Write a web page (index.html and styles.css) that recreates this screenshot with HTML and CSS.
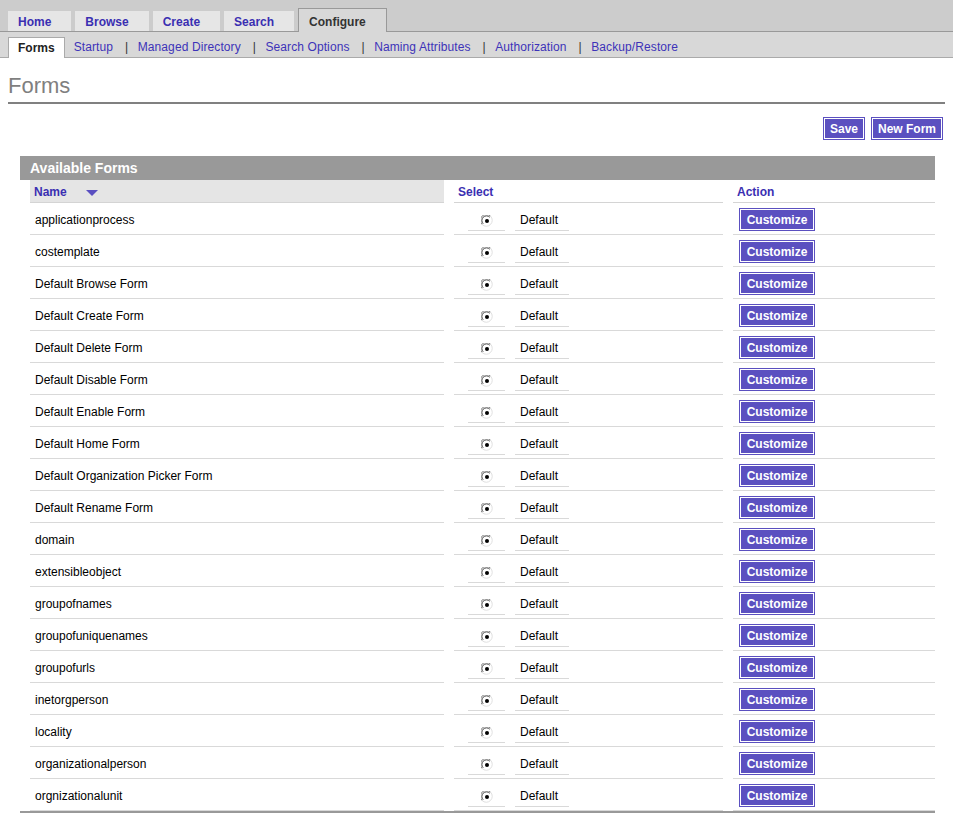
FILE: index.html
```html
<!DOCTYPE html>
<html>
<head>
<meta charset="utf-8">
<title>Forms</title>
<link rel="stylesheet" href="styles.css">
</head>
<body>
<div class="topnav">
  <a class="tab">Home</a>
  <a class="tab">Browse</a>
  <a class="tab">Create</a>
  <a class="tab">Search</a>
  <span class="tab tab-active">Configure</span>
</div>
<div class="subnav">
  <span class="subtab-active">Forms</span>
  <a class="sublink sublink-first">Startup</a><span class="sep">|</span>
  <a class="sublink">Managed Directory</a><span class="sep">|</span>
  <a class="sublink">Search Options</a><span class="sep">|</span>
  <a class="sublink">Naming Attributes</a><span class="sep">|</span>
  <a class="sublink">Authorization</a><span class="sep">|</span>
  <a class="sublink">Backup/Restore</a>
</div>
<div class="page">
  <h1 class="title">Forms</h1>
  <div class="toolbar">
    <button class="btn">Save</button>
    <button class="btn">New Form</button>
  </div>
  <div class="table">
    <div class="table-title">Available Forms</div>
    <div class="grid-row head-row">
      <div class="hcell hcell-name">Name <svg class="sort" width="12" height="7" viewBox="0 0 12 7"><polygon points="0,0 12,0 6,6" fill="#5a4fc1"/></svg></div>
      <div class="hcell">Select</div>
      <div class="hcell">Action</div>
    </div>
    <div id="rows"></div>
  </div>
</div>
<script src="app.js"></script>
</body>
</html>
```
FILE: app.js
```js
var names = ["applicationprocess","costemplate","Default Browse Form","Default Create Form","Default Delete Form","Default Disable Form","Default Enable Form","Default Home Form","Default Organization Picker Form","Default Rename Form","domain","extensibleobject","groupofnames","groupofuniquenames","groupofurls","inetorgperson","locality","organizationalperson","orgnizationalunit"];
var radio = '<svg width="12" height="12" viewBox="0 0 12 12">' +
  '<circle cx="6" cy="6" r="5.5" fill="#fff"/>' +
  '<path d="M1.1 9.5 A5.5 5.5 0 0 1 9.5 1.1" fill="none" stroke="#808080" stroke-width="1"/>' +
  '<path d="M2.2 8.8 A4.5 4.5 0 0 1 8.8 2.2" fill="none" stroke="#404040" stroke-width="1"/>' +
  '<path d="M9.5 1.1 A5.5 5.5 0 0 1 1.1 9.5" fill="none" stroke="#e0e0e0" stroke-width="1"/>' +
  '<circle cx="6" cy="6" r="2" fill="#000"/></svg>';
var html = "";
names.forEach(function (n) {
  html += '<div class="grid-row">' +
    '<div class="cell cell-name">' + n + '</div>' +
    '<div class="cell cell-select"><span class="sub sub-radio">' + radio + '</span><span class="sub sub-label">Default</span></div>' +
    '<div class="cell cell-action"><button class="btn btn-row">Customize</button></div>' +
    '</div>';
});
document.getElementById("rows").innerHTML = html;
```
FILE: styles.css
```css
* { box-sizing: border-box; }
body {
  margin: 0;
  font-family: "Liberation Sans", Arial, sans-serif;
  font-size: 12px;
  color: #000;
  background: #fff;
}
.topnav {
  display: flex;
  align-items: flex-end;
  gap: 4px;
  height: 32px;
  padding-left: 8px;
  background: #cccccc;
  border-bottom: 1px solid #999;
}
.tab {
  display: block;
  height: 20px;
  padding: 1px 20px 0 10px;
  line-height: 21px;
  background: #e6e6e6;
  color: #3a2fb2;
  font-weight: bold;
  font-size: 12px;
}
.tab-active {
  height: 24px;
  padding-top: 2px;
  line-height: 22px;
  margin-bottom: -1px;
  background: #d8d8d8;
  color: #333;
  border: 1px solid #999;
  border-bottom: none;
}
.subnav {
  display: flex;
  align-items: flex-end;
  height: 26px;
  padding-left: 8px;
  background: #d8d8d8;
  border-bottom: 1px solid #aaa;
}
.subtab-active {
  display: block;
  height: 21px;
  line-height: 20px;
  padding: 0 9px;
  margin-bottom: -1px;
  background: #fff;
  border: 1px solid #aaa;
  border-bottom: none;
  font-weight: bold;
  color: #222;
}
.sublink {
  line-height: 20px;
  color: #3d33b8;
  letter-spacing: 0.1px;
}
.sublink-first { margin-left: 9px; }
.sep {
  line-height: 20px;
  padding: 0 9.5px 0 12px;
  color: #333;
}
.page {
  padding: 0 8px;
}
.title {
  margin: 15px 0 0;
  padding-bottom: 3px;
  font-size: 22px;
  line-height: 26px;
  font-weight: normal;
  color: #7f7f7f;
  border-bottom: 2px solid #808080;
}
.toolbar {
  display: flex;
  justify-content: flex-end;
  gap: 6px;
  margin-top: 13px;
  padding-right: 2px;
}
.btn {
  height: 23px;
  padding: 1px 6px 0;
  background: #5b50c0;
  border: 1px solid #5b50c0;
  box-shadow: inset 0 0 0 1px #fff;
  color: #fff;
  font-family: "Liberation Sans", Arial, sans-serif;
  font-weight: bold;
  font-size: 12px;
  line-height: 19px;
  margin: 0;
}
.table {
  margin: 16px 10px 0 12px;
  border-bottom: 2px solid #999;
}
.table-title {
  height: 24px;
  line-height: 24px;
  padding-left: 10px;
  background: #999;
  color: #fff;
  font-weight: bold;
  font-size: 14px;
}
.grid-row {
  display: grid;
  grid-template-columns: 414px 269px 202px;
  column-gap: 10px;
  padding-left: 10px;
}
.hcell {
  height: 23px;
  padding: 2px 0 0 4px;
  line-height: 20px;
  border-bottom: 1px solid #d4d4d4;
  color: #3a2fb2;
  font-weight: bold;
}
.hcell-name {
  background: #e5e5e5;
}
.sort {
  margin-left: 16px;
  vertical-align: -1px;
}
.cell {
  height: 32px;
  border-bottom: 1px solid #d9d9d9;
}
.cell-name {
  padding: 2px 0 0 5px;
  line-height: 30px;
}
.cell-select {
  display: flex;
}
.sub {
  display: flex;
  align-items: center;
  height: 28px;
  padding-top: 7px;
  border-bottom: 1px solid #d9d9d9;
}
.sub-radio {
  width: 37px;
  margin-left: 14px;
  justify-content: center;
}
.sub-radio svg { margin-top: 2px; }
.sub-label {
  width: 54px;
  margin-left: 10px;
  padding-left: 5px;
}
.cell-action {
  padding: 5px 0 0 6px;
}
.btn-row {
  display: block;
  width: 76px;
  padding: 1px 0 0;
}
```
